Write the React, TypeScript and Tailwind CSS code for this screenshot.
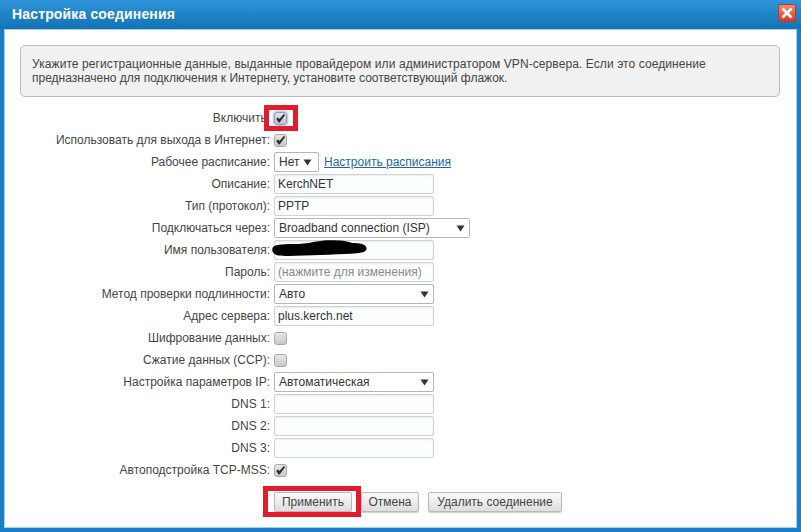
const Check = () => (
  <svg width="11" height="11" viewBox="0 0 11 11" className="block">
    <path d="M1.2 5.8 L3.0 4.4 L4.4 6.0 L8.8 1.0 L10.2 2.0 L4.6 9.6 L3.6 9.6 Z" fill="#2e2e2e" />
  </svg>
);

function Checkbox({ checked, focused }: { checked?: boolean; focused?: boolean }) {
  return (
    <span
      className={
        focused
          ? "flex h-[13px] w-[13px] items-center justify-center rounded-[3px] border border-[#7f9bd6] bg-gradient-to-b from-[#e4e4e4] to-[#c4c4c4] shadow-[0_0_2px_1px_#a9bfe8]"
          : "flex h-[13px] w-[13px] items-center justify-center rounded-[3px] border border-[#a8a8a8] bg-gradient-to-b from-[#e8e8e8] to-[#c8c8c8]"
      }
    >
      {checked && <Check />}
    </span>
  );
}

function Input({ value, muted, children }: { value?: string; muted?: boolean; children?: React.ReactNode }) {
  return (
    <div
      className={
        "relative h-[20px] w-[160px] rounded-[2px] border border-[#cfd3d3] bg-[#fbfefe] pl-[3px] text-[12px] leading-[18px] shadow-[inset_0_1px_2px_#e6eaea] " +
        (muted ? "text-[#8a8a8a]" : "text-[#333]")
      }
    >
      {value}
      {children}
    </div>
  );
}

function Select({ value, w }: { value: string; w: string }) {
  return (
    <div className={"flex h-[20px] items-center justify-between rounded-[2px] border border-[#b5b5b5] bg-white pl-[4px] text-[12px] text-[#333] " + w}>
      <span>{value}</span>
      <svg width="9" height="7" viewBox="0 0 9 7">
        <path d="M0.5 0.5 H8.5 L4.5 6.5 Z" fill="#333" />
      </svg>
    </div>
  );
}

function Row({ label, children }: { label: string; children: React.ReactNode }) {
  return (
    <div className="flex h-[22px] items-center">
      <div className="w-[250px] text-right text-[12px] whitespace-nowrap text-[#444]">{label}</div>
      <div className="ml-[4px] flex items-center">{children}</div>
    </div>
  );
}

function Btn({ children, w }: { children: React.ReactNode; w: string }) {
  return (
    <button className={"h-[20px] rounded-[2px] border border-[#b9b9b9] bg-gradient-to-b from-[#fafafa] to-[#dedede] text-center text-[12px] leading-[16px] text-[#444] shadow-[0_1px_1px_#cfcfcf] " + w}>
      {children}
    </button>
  );
}

export default function App() {
  return (
    <div className="flex h-[532px] w-[801px] flex-col overflow-hidden bg-[#1a7fc7] font-['Liberation_Sans',Arial,sans-serif]">
      <div className="flex h-[29px] shrink-0 items-start justify-between bg-gradient-to-b from-[#2f95da] to-[#1272b6] pt-[4px] pr-[5px] pl-[12px]">
        <div className="text-[14px] leading-[20px] font-bold tracking-[0.15px] text-white">Настройка соединения</div>
        <div className="flex h-[18px] w-[18px] items-center justify-center rounded-[2px] border border-[#a8402f] bg-gradient-to-b from-[#f08a6e] to-[#cf3f26]">
          <svg width="12" height="12" viewBox="0 0 12 12">
            <path d="M1.5 1.5 L10.5 10.5 M10.5 1.5 L1.5 10.5" stroke="#fff" strokeWidth="2.6" />
          </svg>
        </div>
      </div>
      <div className="mx-[4px] mb-[4px] flex flex-1 flex-col border border-[#a9cfe9] bg-white px-[15px] pt-[15px]">
        <div className="h-[52px] w-[760px] rounded-[5px] border border-[#bdbdbd] bg-[#f1f1f1] pt-[11px] pl-[11px] text-[12px] leading-[14px] text-[#444]">
          <span className="tracking-[0.085px]">Укажите регистрационные данные, выданные провайдером или администратором VPN-сервера. Если это соединение</span>
          <br />
          предназначено для подключения к Интернету, установите соответствующий флажок.
        </div>
        <div className="mt-[10px]">
          <Row label="Включить:">
            <span className="relative">
              <Checkbox checked focused />
              <span className="absolute top-[-7px] left-[-10px] h-[26px] w-[34px] border-[5px] border-[#e21b2d]" />
            </span>
          </Row>
          <Row label="Использовать для выхода в Интернет:"><Checkbox checked /></Row>
          <Row label="Рабочее расписание:">
            <Select value="Нет" w="w-[45px] pr-[6px]" />
            <a className="ml-[5px] text-[12px] text-[#1b6aa0] underline">Настроить расписания</a>
          </Row>
          <Row label="Описание:"><Input value="KerchNET" /></Row>
          <Row label="Тип (протокол):"><Input value="PPTP" /></Row>
          <Row label="Подключаться через:"><Select value="Broadband connection (ISP)" w="w-[196px] pr-[4px]" /></Row>
          <Row label="Имя пользователя:">
            <Input>
              <svg width="96" height="17" viewBox="0 0 96 17" className="absolute top-[-1px] left-[-3px]">
                <path d="M1 7 C4 4 14 4 24 4 C34 4 42 1.5 52 0.5 C62 0 74 0.5 80 3 C88 3 94 4 94.5 8 C95 12 90 13 82 13.5 C72 14 60 14.5 48 15 C34 15.5 14 16.5 6 15.5 C1 14.5 -1 10 1 7 Z" fill="#000" />
              </svg>
            </Input>
          </Row>
          <Row label="Пароль:"><Input value="(нажмите для изменения)" muted /></Row>
          <Row label="Метод проверки подлинности:"><Select value="Авто" w="w-[160px] pr-[4px]" /></Row>
          <Row label="Адрес сервера:"><Input value="plus.kerch.net" /></Row>
          <Row label="Шифрование данных:"><Checkbox /></Row>
          <Row label="Сжатие данных (CCP):"><Checkbox /></Row>
          <Row label="Настройка параметров IP:"><Select value="Автоматическая" w="w-[160px] pr-[4px]" /></Row>
          <Row label="DNS 1:"><Input /></Row>
          <Row label="DNS 2:"><Input /></Row>
          <Row label="DNS 3:"><Input /></Row>
          <Row label="Автоподстройка TCP-MSS:"><Checkbox checked /></Row>
          <div className="mt-[11px] ml-[254px] flex gap-[9px]">
            <span className="relative flex">
              <Btn w="w-[78px]">Применить</Btn>
              <span className="absolute top-[-6px] left-[-11px] h-[31px] w-[98px] border-[5px] border-[#e21b2d]" />
            </span>
            <Btn w="w-[58px]">Отмена</Btn>
            <Btn w="w-[134px]">Удалить соединение</Btn>
          </div>
        </div>
      </div>
    </div>
  );
}
